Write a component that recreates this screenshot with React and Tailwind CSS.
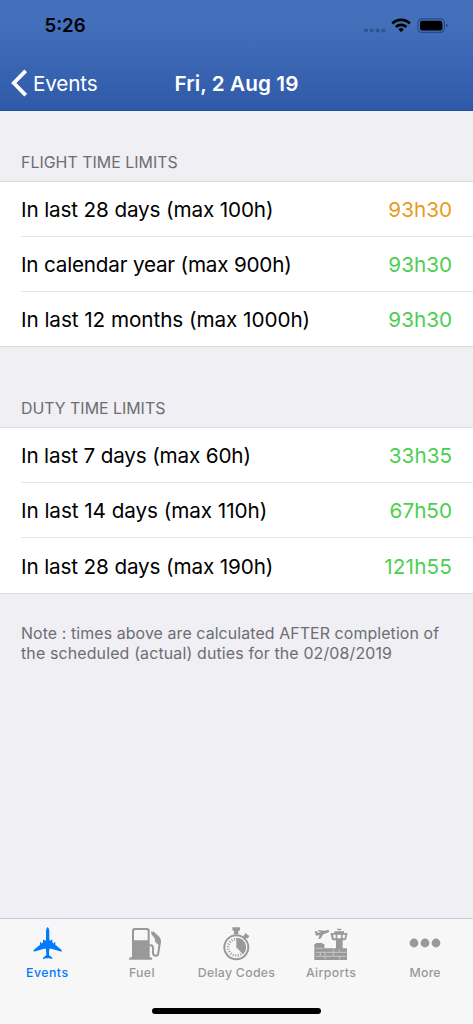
const flight = [
  ["In last 28 days (max 100h)", "93h30", "text-[#eb9a1c]", "tracking-[-0.14px]"],
  ["In calendar year (max 900h)", "93h30", "text-[#4ccf4f]", "tracking-[-0.21px]"],
  ["In last 12 months (max 1000h)", "93h30", "text-[#4ccf4f]", "tracking-[-0.06px]"],
];
const duty = [
  ["In last 7 days (max 60h)", "33h35", "text-[#4ccf4f]", "tracking-[-0.16px]"],
  ["In last 14 days (max 110h)", "67h50", "text-[#4ccf4f]", "tracking-[-0.06px]"],
  ["In last 28 days (max 190h)", "121h55", "text-[#4ccf4f]", "tracking-[-0.14px]"],
];

function Limits({ rows, lastHeight }) {
  return (
    <ul className="border-y border-[#dcdce0] bg-white pl-[21px] text-[20.7px]">
      {rows.map(([label, value, color, tracking], i) => (
        <li
          key={label}
          className={`flex items-center justify-between pt-[2px] pr-[21px] ${i < 2 ? "h-[55px] border-b border-[#e6e6e9]" : lastHeight}`}
        >
          <span className={`whitespace-nowrap text-black ${tracking}`}>{label}</span>
          <span className={`${value.length > 5 ? "tracking-[0.15px]" : "tracking-[0px]"} ${color}`}>{value}</span>
        </li>
      ))}
    </ul>
  );
}

function Plane() {
  return (
    <svg viewBox="99 50 90 100" className="ml-px h-[33.3px] w-[30px]" fill="currentColor">
      <path d="M143 50c-3 2-5 8-5 15v24l-4 3v-4h-5v8l-5 4v-4h-4v7l-19 16v5l31-9h6l1 19-10 8v4l13-3 1 4 1-4 13 3v-4l-10-8 1-19h6l31 9v-5l-19-16v-7h-4v4l-5-4v-8h-5v4l-4-3V65c0-7-2-13-5-15z" />
    </svg>
  );
}

function Fuel() {
  return (
    <svg viewBox="388 53 96 96" className="ml-[7px] size-[32px]" fill="currentColor">
      <path fillRule="evenodd" d="M405 53h37q8 0 8 8v80h3q5 0 5 7H388q0-7 5-7h4V61q0-8 8-8zm2 6q-4 0-4 4v27h41V63q0-4-4-4z" />
      <path d="M449 105h4q7 0 7 8v14q0 9 8 9t8-9l5-34q0-6-3-10l-19-18" fill="none" stroke="currentColor" strokeWidth="6" />
      <path d="M455 62l20 17 8 12-2 16-14-11-2-12-10-12z" />
    </svg>
  );
}

function Stopwatch() {
  return (
    <svg viewBox="128 50 82 102" className="h-[34px] w-[27.3px]" fill="currentColor">
      <path d="M156 51h23v8l-5 4v9h-13v-9l-5-4z" />
      <path d="M190 76l5-8 12 9-4 7-5-1-4 4-6-5z" />
      <circle cx="168" cy="111" r="36" fill="none" stroke="currentColor" strokeWidth="6" />
      <circle cx="168" cy="111" r="24.5" fill="none" stroke="currentColor" strokeWidth="8" strokeDasharray="3 4.7" />
      <path d="M168 82a29 29 0 0 1 20 50l-20-21z" />
    </svg>
  );
}

function Airport() {
  return (
    <svg viewBox="402 54 100 97" className="h-[32.3px] w-[33.3px]" fill="currentColor">
      <path d="M404 64l4-1 7 5 9-2-12-3 5-3 17 2 9-2q5 0 5 3-1 4-7 6l-11 4-9 13-6 1 4-12-11 2z" />
      <path fillRule="evenodd" d="M469 56h15v4h-5v4h13v5h8q3 0 2 4l-3 13q-1 5-7 5h-4v24h13v35H403v-48h4v-3h21v3h5v13h35V91h-6q-6 0-7-5l-3-13q-1-4 3-4h8v-5h14v-4h-3zM459 74l2 11h6V74zm13 0v11h11V74zm16 0v11h6l2-11z" />
      <path d="M407 115h22M407 127h91M407 139h91M435 129v8M460 118v7M479 118v7M460 129v8M479 141v7M421 129v8M435 141v7" stroke="#f7f7f8" strokeOpacity=".8" strokeWidth="2" fill="none" />
    </svg>
  );
}

function Dots() {
  return (
    <svg viewBox="0 0 32 10" className="mr-[2px] mb-[2px] h-[10px] w-[32px]" fill="currentColor">
      <circle cx="5" cy="5" r="4.4" /><circle cx="16" cy="5" r="4.4" /><circle cx="27" cy="5" r="4.4" />
    </svg>
  );
}

const tabs = [
  ["Events", Plane, "text-[#007aff]", "tracking-[0.5px]"],
  ["Fuel", Fuel, "text-[#999999]", "tracking-[0.35px]"],
  ["Delay Codes", Stopwatch, "text-[#999999]", "tracking-[0.3px]"],
  ["Airports", Airport, "text-[#999999]", "tracking-[0.35px]"],
  ["More", Dots, "text-[#999999]", "tracking-[0.2px] -ml-px"],
];

export default function App() {
  return (
    <div className="flex h-[1024px] w-[473px] flex-col overflow-hidden bg-[#efeff4] font-['Inter','Liberation_Sans',sans-serif]">
      <header className="h-[111px] shrink-0 border-b border-[#27509b] bg-linear-to-b from-[#436fbb] from-20% to-[#2f5aa8]">
        <div className="flex h-[52px] items-center justify-between pr-[24px] pl-[44.5px]">
          <span className="text-[18.6px] font-semibold text-black">5:26</span>
          <svg viewBox="0 0 86 16" className="h-4 w-[86px]">
            <g fill="#2d528f"><circle cx="3" cy="12.5" r="2" /><circle cx="8.8" cy="12.5" r="2" /><circle cx="14.6" cy="12.5" r="2" /><circle cx="20.4" cy="12.5" r="2" /></g>
            <g fill="none" stroke="#000" strokeWidth="2.8"><path d="M29.3 5.5a12.7 12.7 0 0 1 17.6 0" /><path d="M32.8 9a7.8 7.8 0 0 1 10.6 0" /></g>
            <path d="M38.1 14.3l-2.7-3a4 4 0 0 1 5.4 0z" />
            <rect x="55" y=".8" width="26.4" height="13.6" rx="4" fill="none" stroke="#284b86" strokeWidth="1.2" />
            <rect x="57" y="2.8" width="22.4" height="9.6" rx="2.2" />
            <path d="M83 5.4q1.8.7 1.8 2.2T83 9.8z" fill="#284b86" />
          </svg>
        </div>
        <div className="grid h-[63px] grid-cols-[1fr_auto_1fr] items-center text-[20.7px] text-white">
          <span className="flex items-center gap-[6px] pl-[11px] tracking-[-0.15px]">
            <svg viewBox="0 0 16 28" className="h-[28px] w-4" fill="none" stroke="currentColor" strokeWidth="3.8"><path d="M14.7 1.8L2.8 14l11.9 12.2" /></svg>
            <span className="pt-px">Events</span>
          </span>
          <span className="pt-px font-semibold tracking-[0.08px]">Fri, 2 Aug 19</span>
        </div>
      </header>
      <main className="flex-1 text-[#6d6d72]">
        <h2 className="h-[70px] pt-[42px] pl-[21px] text-[15.9px] leading-[20px] tracking-[0.03px]">FLIGHT TIME LIMITS</h2>
        <Limits rows={flight} lastHeight="h-[54px]" />
        <h2 className="h-[80px] pt-[52px] pl-[21px] text-[15.9px] leading-[20px]">DUTY TIME LIMITS</h2>
        <Limits rows={duty} lastHeight="h-[55px]" />
        <p className="pt-[30px] pl-[21px] text-[15.9px] leading-[20px] whitespace-nowrap">
          <span className="block tracking-[0.1px]">Note : times above are calculated AFTER completion of</span>
          <span className="block tracking-[0.16px]">the scheduled (actual) duties for the 02/08/2019</span>
        </p>
      </main>
      <footer className="flex h-[106px] shrink-0 flex-col items-center border-t border-[#cdcdd1] bg-[#f7f7f8]">
        <nav className="grid h-[70px] w-full grid-cols-5">
          {tabs.map(([name, Icon, color, tracking]) => (
            <div key={name} className={`flex flex-col items-center ${color}`}>
              <span className="flex h-[50px] items-center"><Icon /></span>
              <span className={`text-[12.3px] leading-[8px] font-medium whitespace-nowrap ${tracking}`}>{name}</span>
            </div>
          ))}
        </nav>
        <div className="mt-[19px] h-[6px] w-[169px] rounded-full bg-black" />
      </footer>
    </div>
  );
}
